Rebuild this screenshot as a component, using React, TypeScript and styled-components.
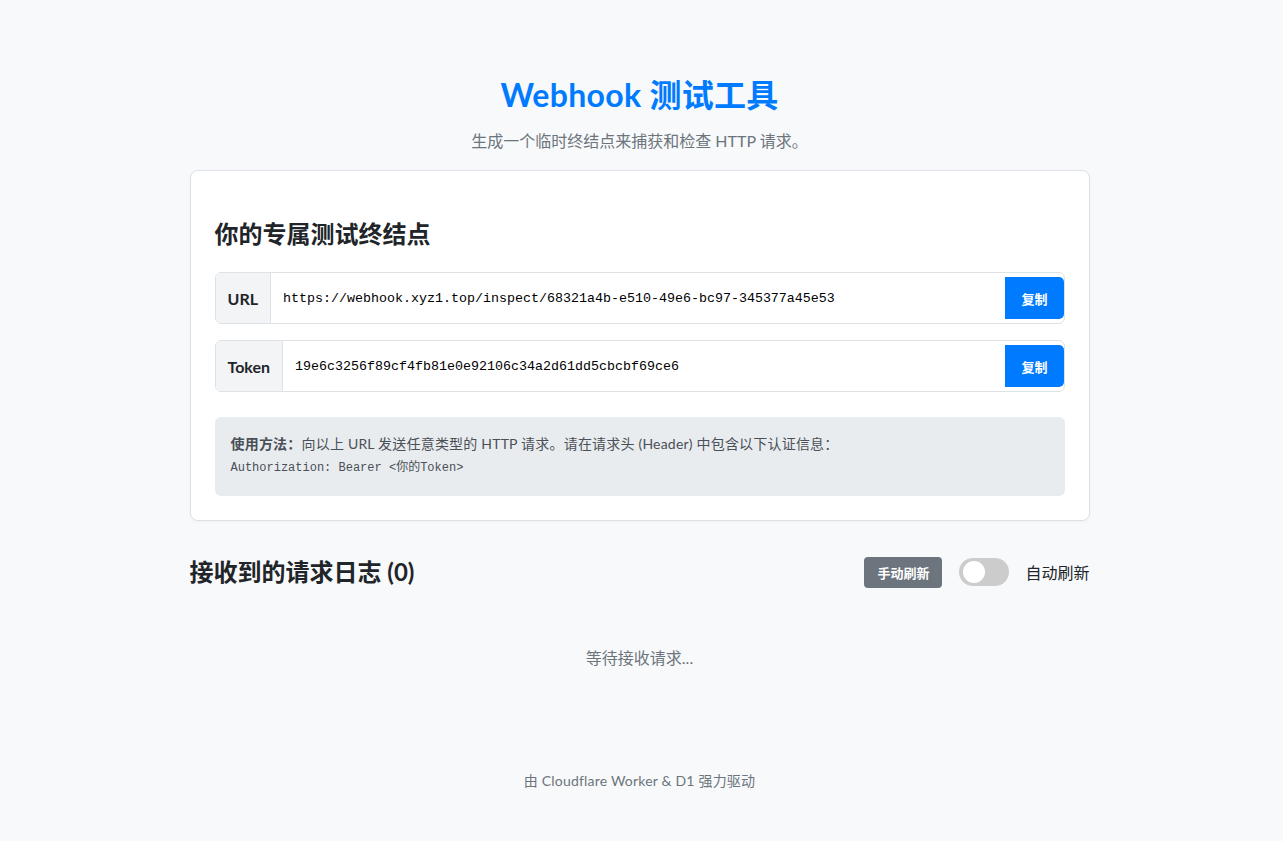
import React from "react";
import styled, { createGlobalStyle } from "styled-components";

const GlobalStyle = createGlobalStyle`
  html, body { margin: 0; padding: 0; }
  body {
    background: #f8f9fa;
    color: #212529;
    font-family: Lato, "Noto Sans CJK SC", sans-serif;
  }
`;

const Page = styled.div`
  max-width: 900px;
  margin: 0 auto;
  padding: 75px 4px 50px 0;
`;

const Header = styled.header`
  text-align: center;
`;

const Title = styled.h1`
  margin: 0;
  font-size: 32px;
  line-height: 40px;
  font-weight: 700;
  color: #007bff;
  letter-spacing: 0.3px;
`;

const Subtitle = styled.p`
  margin: 14px 0 17px;
  font-size: 16px;
  line-height: 24px;
  color: #6c757d;
`;

const Card = styled.section`
  background: #fff;
  border: 1px solid #dee2e6;
  border-radius: 8px;
  padding: 24px;
  box-shadow: 0 1px 3px rgba(0, 0, 0, 0.04);
`;

const CardTitle = styled.h2`
  margin: 23px 0 22px;
  font-size: 24px;
  line-height: 32px;
  font-weight: 700;
  color: #212529;
`;

const InputGroup = styled.div`
  display: flex;
  align-items: center;
  height: 52px;
  box-sizing: border-box;
  border: 1px solid #dee2e6;
  border-radius: 6px;
  background: #fff;
  margin-bottom: 16px;
  overflow: hidden;
`;

const GroupLabel = styled.span`
  align-self: stretch;
  display: flex;
  align-items: center;
  padding: 0 12px;
  background: #f3f4f6;
  border-right: 1px solid #dee2e6;
  font-size: 16px;
  font-weight: 700;
  color: #212529;
`;

const GroupValue = styled.input`
  flex: 1;
  min-width: 0;
  border: none;
  outline: none;
  background: transparent;
  padding: 0 12px;
  font-family: "Liberation Mono", "Noto Sans CJK SC", monospace;
  font-size: 13.33px;
  color: #000;
`;

const CopyButton = styled.button`
  height: 42px;
  padding: 0 16px;
  border: none;
  border-radius: 0 5px 5px 0;
  background: #007bff;
  color: #fff;
  font-family: Lato, "Noto Sans CJK SC", sans-serif;
  font-size: 13px;
  font-weight: 700;
  cursor: pointer;
`;

const Info = styled.div`
  margin-top: 25px;
  background: #e9ecef;
  border-radius: 6px;
  padding: 16px 16px 17px;
  color: #495057;
`;

const InfoLine = styled.p`
  margin: 0;
  font-size: 14px;
  line-height: 22px;
  letter-spacing: 0.2px;
`;

const InfoStrong = styled.strong`
  font-weight: 700;
`;

const Code = styled.code`
  display: block;
  margin-top: 2px;
  font-family: "Liberation Mono", "Noto Sans CJK SC", monospace;
  font-size: 12px;
  line-height: 22px;
  color: #495057;
`;

const LogHeader = styled.div`
  display: flex;
  align-items: center;
  justify-content: space-between;
  margin-top: 35px;
`;

const LogTitle = styled.h2`
  margin: 0;
  font-size: 24px;
  line-height: 32px;
  font-weight: 700;
  color: #212529;
`;

const Controls = styled.div`
  display: flex;
  align-items: center;
  gap: 16px;
`;

const RefreshButton = styled.button`
  height: 31px;
  padding: 0 13px;
  border: none;
  border-radius: 4px;
  background: #6c757d;
  color: #fff;
  font-family: Lato, "Noto Sans CJK SC", sans-serif;
  font-size: 13px;
  font-weight: 700;
  margin-right: 1px;
`;

const Switch = styled.span<{ $on?: boolean }>`
  position: relative;
  display: inline-block;
  width: 50px;
  height: 28px;
  border-radius: 14px;
  background: ${(p) => (p.$on ? "#007bff" : "#ccc")};
  &::after {
    content: "";
    position: absolute;
    top: 3px;
    left: ${(p) => (p.$on ? "25px" : "4px")};
    width: 22px;
    height: 22px;
    border-radius: 50%;
    background: #fff;
  }
`;

const SwitchLabel = styled.span`
  font-size: 16px;
  color: #212529;
`;

const Empty = styled.p`
  margin: 58px 0 0;
  text-align: center;
  font-size: 16px;
  line-height: 24px;
  color: #6c757d;
`;

const Footer = styled.footer`
  margin-top: 101px;
  text-align: center;
  font-size: 14px;
  line-height: 20px;
  color: #6c757d;
  letter-spacing: 0.2px;
`;

export default function App() {
  return (
    <>
      <GlobalStyle />
      <Page>
        <Header>
          <Title>Webhook 测试工具</Title>
          <Subtitle>生成一个临时终结点来捕获和检查 HTTP 请求。</Subtitle>
        </Header>
        <Card>
          <CardTitle>你的专属测试终结点</CardTitle>
          <InputGroup>
            <GroupLabel>URL</GroupLabel>
            <GroupValue
              readOnly
              value="https://webhook.xyz1.top/inspect/68321a4b-e510-49e6-bc97-345377a45e53"
            />
            <CopyButton>复制</CopyButton>
          </InputGroup>
          <InputGroup>
            <GroupLabel>Token</GroupLabel>
            <GroupValue readOnly value="19e6c3256f89cf4fb81e0e92106c34a2d61dd5cbcbf69ce6" />
            <CopyButton>复制</CopyButton>
          </InputGroup>
          <Info>
            <InfoLine>
              <InfoStrong>使用方法：</InfoStrong>向以上 URL 发送任意类型的 HTTP 请求。请在请求头 (Header) 中包含以下认证信息：
            </InfoLine>
            <Code>Authorization: Bearer &lt;你的Token&gt;</Code>
          </Info>
        </Card>
        <LogHeader>
          <LogTitle>接收到的请求日志 (0)</LogTitle>
          <Controls>
            <RefreshButton>手动刷新</RefreshButton>
            <Switch />
            <SwitchLabel>自动刷新</SwitchLabel>
          </Controls>
        </LogHeader>
        <Empty>等待接收请求...</Empty>
        <Footer>由 Cloudflare Worker &amp; D1 强力驱动</Footer>
      </Page>
    </>
  );
}
